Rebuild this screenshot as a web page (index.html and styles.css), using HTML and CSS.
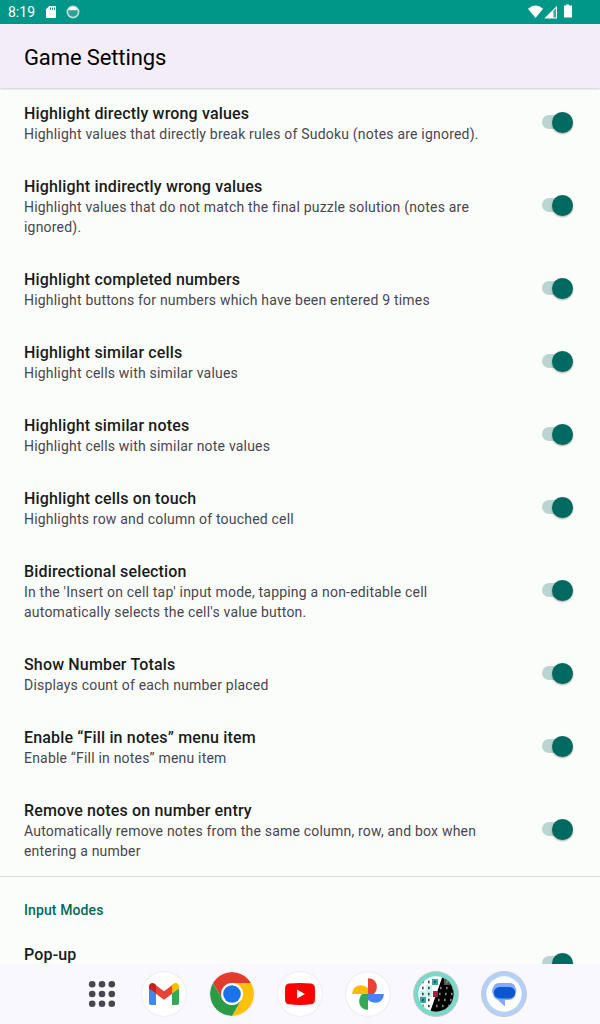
FILE: index.html
```
<!DOCTYPE html>
<html lang="en">
<head>
<meta charset="utf-8">
<title>Game Settings</title>
<link rel="stylesheet" href="styles.css">
</head>
<body>
<div class="screen">
  <div class="status">
    <span class="clock">8:19</span>
    <svg class="sd" width="10" height="12" viewBox="0 0 10 12"><path fill="#fff" d="M3.3 0H9a1 1 0 0 1 1 1v10a1 1 0 0 1-1 1H1a1 1 0 0 1-1-1V3.3z"/><path stroke="#009688" d="M4.5 1.5v2.3M6.5 1.5v2.3M8.5 1.5v2.3"/></svg>
    <svg class="ring" width="14" height="14" viewBox="0 0 14 14"><circle cx="7" cy="7" r="5.6" fill="#27a397" stroke="#b8dfdb" stroke-width="1.8"/><path fill="#fff" d="M2.6 4Q4 1.5 7 1.5T11.4 4L10.5 5.2h-7z"/></svg>
    <svg class="signals" width="45" height="16" viewBox="0 0 45 16"><path fill="#fff" d="M0 4.700Q7.500-1.500 15 4.700L7.500 14z"/><path fill="#fff" d="M16.300 14.500L29 1.700V14.500z"/><path fill="#36aca0" d="M25.400 6.700L28 4V13.500h-2.600z"/><path fill="#fff" d="M38 .5h3v1h3v12h-8v-12h2z"/></svg>
  </div>
  <header class="bar"><h1>Game Settings</h1></header>
  <main class="list">
    <section class="row"><div class="text"><h2>Highlight directly wrong values</h2><p>Highlight values that directly break rules of Sudoku (notes are ignored).</p></div><i class="switch"></i></section>
    <section class="row"><div class="text"><h2>Highlight indirectly wrong values</h2><p>Highlight values that do not match the final puzzle solution (notes are ignored).</p></div><i class="switch"></i></section>
    <section class="row"><div class="text"><h2>Highlight completed numbers</h2><p>Highlight buttons for numbers which have been entered 9 times</p></div><i class="switch"></i></section>
    <section class="row"><div class="text"><h2>Highlight similar cells</h2><p>Highlight cells with similar values</p></div><i class="switch"></i></section>
    <section class="row"><div class="text"><h2>Highlight similar notes</h2><p>Highlight cells with similar note values</p></div><i class="switch"></i></section>
    <section class="row"><div class="text"><h2>Highlight cells on touch</h2><p>Highlights row and column of touched cell</p></div><i class="switch"></i></section>
    <section class="row"><div class="text"><h2>Bidirectional selection</h2><p>In the 'Insert on cell tap' input mode, tapping a non-editable cell automatically selects the cell's value button.</p></div><i class="switch"></i></section>
    <section class="row"><div class="text"><h2>Show Number Totals</h2><p>Displays count of each number placed</p></div><i class="switch"></i></section>
    <section class="row"><div class="text"><h2>Enable “Fill in notes” menu item</h2><p>Enable “Fill in notes” menu item</p></div><i class="switch"></i></section>
    <section class="row"><div class="text"><h2>Remove notes on number entry</h2><p>Automatically remove notes from the same column, row, and box when entering a number</p></div><i class="switch"></i></section>
    <h3 class="category">Input Modes</h3>
    <section class="row popup"><div class="text"><h2>Pop-up</h2></div><i class="switch"></i></section>
  </main>
  <nav class="dock">
    <svg class="launcher" width="44" height="44" viewBox="0 0 44 44" fill="#454651"><circle cx="12.2" cy="12.3" r="3.3"/><circle cx="22" cy="12.3" r="3.3"/><circle cx="31.8" cy="12.3" r="3.3"/><circle cx="12.2" cy="22" r="3.3"/><circle cx="22" cy="22" r="3.3"/><circle cx="31.8" cy="22" r="3.3"/><circle cx="12.2" cy="31.7" r="3.3"/><circle cx="22" cy="31.7" r="3.3"/><circle cx="31.8" cy="31.7" r="3.3"/></svg>
    <svg class="disc" width="44" height="44" viewBox="0 0 44 44"><path fill="#4285f4" d="M7 16l7 5v12H9a2 2 0 0 1-2-2z"/><path fill="#34a853" d="M37 16l-7 5v12h5a2 2 0 0 0 2-2z"/><path fill="#ea4335" d="M13 12.500l9 6.800 9-6.800v8.400l-9 6.800-9-6.800z"/><path fill="#c5221f" d="M7 14.500c0-3.200 3.500-4.500 6-2.500l1 1v8.500l-7-5z"/><path fill="#fbbc04" d="M37 14.500c0-3.200-3.500-4.500-6-2.500l-1 1v8.500l7-5z"/></svg>
    <svg class="disc" width="44" height="44" viewBox="0 0 44 44"><path fill="#e33b2e" d="M2.950 11A22 22 0 0 1 41.050 11H22L12.500 27.500z"/><path fill="#ffc107" d="M41.050 11A22 22 0 0 1 22 44L31.500 27.500 22 11z"/><path fill="#2b9b48" d="M22 44A22 22 0 0 1 2.950 11L12.500 27.500Q22 38 31.500 27.500z"/><circle cx="22" cy="22" r="11" fill="#fff"/><circle cx="22" cy="22" r="8.800" fill="#1a73e8"/></svg>
    <svg class="disc" width="44" height="44" viewBox="0 0 44 44"><path fill="#f00" d="M11 11.500Q22 10.500 33 11.500 36.500 12 36.800 15 37.400 22 36.800 29 36.500 32 33 32.300 22 33.500 11 32.300 7.500 32 7.200 29 6.600 22 7.200 15 7.500 12 11 11.500z"/><path fill="#fff" d="M19 17.500v9l8-4.500z"/></svg>
    <svg class="disc" width="44" height="44" viewBox="0 0 44 44"><path fill="#ea4335" d="M22 6.200c5 0 8.800 3.500 8.800 8.300 0 3-1 5.500-3 7.500H22z"/><path fill="#4285f4" d="M37.800 22c0 5-3.500 8.800-8.300 8.800-3 0-5.500-1-7.500-3V22z"/><path fill="#34a853" d="M22 37.800c-5 0-8.800-3.500-8.800-8.300 0-3 1-5.500 3-7.500H22z"/><path fill="#fbbc04" d="M6.200 22c0-5 3.500-8.800 8.300-8.800 3 0 5.500 1 7.500 3V22z"/></svg>
    <svg class="app" width="48" height="48" viewBox="0 0 48 48">
      <defs><clipPath id="face"><circle cx="24" cy="24" r="17.700"/></clipPath></defs>
      <circle cx="24" cy="24" r="22.500" fill="#78d8ca" stroke="#c8c8cf"/>
      <g clip-path="url(#face)"><path fill="#fff" d="M0 0h48v48H0z"/><path fill="#c9f3ee" d="M8 21h12v6H8zM14 15h6v6h-6z"/><path fill="#35a99b" d="M20 9h6v6h-6zM8 27h6v6H8z"/><path fill="#000" d="M31 5h17v43H16z"/><path fill="#555" d="M32 9h6v6h-6z"/><path fill="#a51f42" d="M21 21h5v6h-5z"/>
      <g stroke-width="2.500" stroke-dasharray="1.600 4.400"><path stroke="#344" d="M10 12h14M10 18h12M10 24h11M10 30h10M10 36h8"/><path stroke="#888" d="M28 18h14M27 24h15M26 30h16M24 36h14M34 12h8"/></g></g>
    </svg>
    <svg class="app" width="48" height="48" viewBox="0 0 48 48"><circle cx="24" cy="24" r="22.500" fill="#b3d0fa" stroke="#c8c8cf"/><circle cx="24" cy="24" r="17.700" fill="#fff"/><path fill="#82aaff" d="M19 13h11q4 0 5.500 4.500 1.500 2 .5 5-1 7.500-7.500 7.500H20q-6 0-7-6-2-3-.5-5 1.500-6 6.500-6z"/><path fill="#82aaff" d="M18 28h7v7.500q0 1-1 .2l-5.500-5z"/><path fill="#0b57d0" d="M19.500 17h10a5.700 5.700 0 0 1 0 11.400h-10a5.700 5.700 0 0 1 0-11.400z"/></svg>
  </nav>
</div>
</body>
</html>
```
FILE: styles.css
```
* { box-sizing: border-box; }
body { margin: 0; font-family: Roboto, sans-serif; background: #fbfdfa; }
h1, h2, h3, p { margin: 0; }
svg { display: block; flex: none; }
.screen { height: 1024px; width: 600px; overflow: hidden; display: flex; flex-direction: column; }
.status { flex: none; height: 24px; background: #009688; display: flex; align-items: center; padding: 0 27px 0 8px; color: #fff; }
.clock { font-size: 14px; width: 38px; line-height: 24px; }
.ring { margin-left: 10px; }
.signals { margin-left: auto; margin-top: -1px; }
.bar { flex: none; height: 64px; background: #f3edf7; padding-left: 24px; box-shadow: 0 1px 2px rgba(0,0,0,.18); z-index: 1; }
.bar h1 { font-size: 22px; font-weight: 400; line-height: 67px; letter-spacing: -.12px; color: #000; }
.list { flex: 1; min-height: 0; overflow: hidden; margin-top: -2px; }
.row { display: flex; align-items: center; justify-content: space-between; padding: 16px 27px 16px 24px; }
.text { width: 480px; }
.row h2 { font-size: 16px; font-weight: 500; line-height: 23px; margin-bottom: -2px; letter-spacing: .16px; color: #191c1b; }
.row p { padding-top: 1px; margin-bottom: -1px; font-size: 14px; line-height: 20px; letter-spacing: .2px; color: #49454f; }
.switch { width: 31px; height: 14px; margin-bottom: 1px; border-radius: 7px; background: #b9d5d1; display: flex; justify-content: flex-end; align-items: center; }
.switch::after { content: ""; width: 21px; height: 21px; flex: none; border-radius: 50%; background: #006a60; box-shadow: 0 1px 2px rgba(0,0,0,.35); }
.category { border-top: 1px solid #d9dbd9; padding: 23px 24px 9px; font-size: 14px; font-weight: 500; line-height: 20px; letter-spacing: .1px; color: #006a60; }
.popup { height: 73px; align-items: flex-start; padding-top: 14px; }
.popup .switch { margin-top: 13px; }
.dock { flex: none; height: 60px; background: #faf8ff; display: flex; justify-content: center; align-items: center; gap: 24px; padding-left: 6px; }
.launcher { margin-right: -6px; }
.disc { border-radius: 50%; background: #fff; box-shadow: 0 0 2px rgba(0,0,0,.14); }
.app { margin: 0 -2px; }
```
